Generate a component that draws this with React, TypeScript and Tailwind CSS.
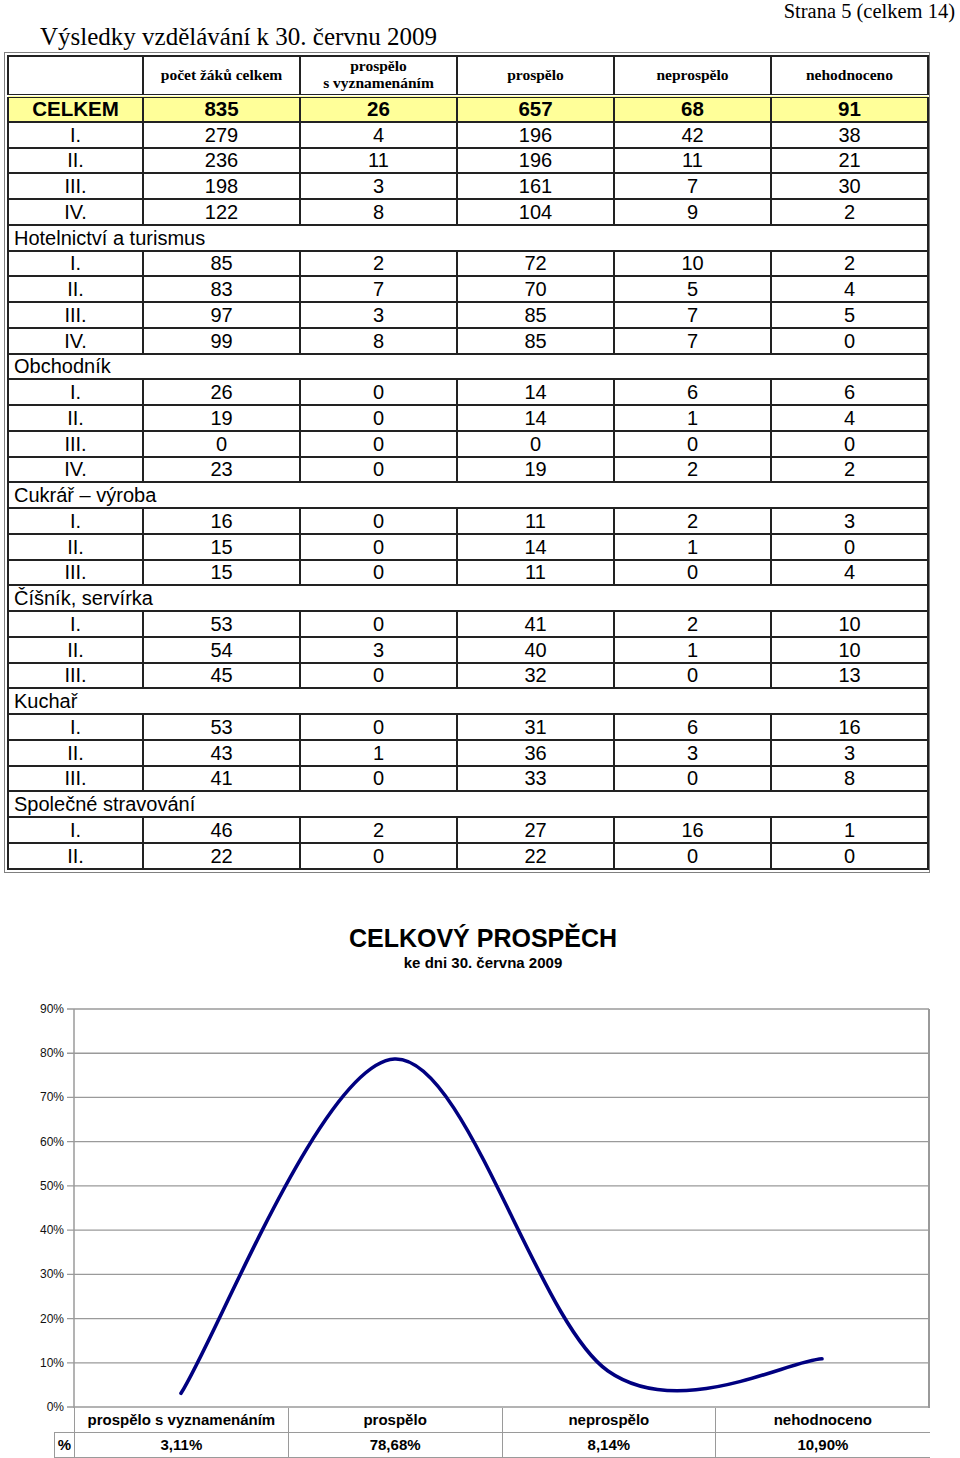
const serif = { fontFamily: '"Liberation Serif", "Times New Roman", serif' };

type Row = [string, number, number, number, number, number];

const totals: Row[] = [
  ["I.", 279, 4, 196, 42, 38],
  ["II.", 236, 11, 196, 11, 21],
  ["III.", 198, 3, 161, 7, 30],
  ["IV.", 122, 8, 104, 9, 2],
];

const sections: { name: string; rows: Row[] }[] = [
  {
    name: "Hotelnictví a turismus",
    rows: [
      ["I.", 85, 2, 72, 10, 2],
      ["II.", 83, 7, 70, 5, 4],
      ["III.", 97, 3, 85, 7, 5],
      ["IV.", 99, 8, 85, 7, 0],
    ],
  },
  {
    name: "Obchodník",
    rows: [
      ["I.", 26, 0, 14, 6, 6],
      ["II.", 19, 0, 14, 1, 4],
      ["III.", 0, 0, 0, 0, 0],
      ["IV.", 23, 0, 19, 2, 2],
    ],
  },
  {
    name: "Cukrář – výroba",
    rows: [
      ["I.", 16, 0, 11, 2, 3],
      ["II.", 15, 0, 14, 1, 0],
      ["III.", 15, 0, 11, 0, 4],
    ],
  },
  {
    name: "Číšník, servírka",
    rows: [
      ["I.", 53, 0, 41, 2, 10],
      ["II.", 54, 3, 40, 1, 10],
      ["III.", 45, 0, 32, 0, 13],
    ],
  },
  {
    name: "Kuchař",
    rows: [
      ["I.", 53, 0, 31, 6, 16],
      ["II.", 43, 1, 36, 3, 3],
      ["III.", 41, 0, 33, 0, 8],
    ],
  },
  {
    name: "Společné stravování",
    rows: [
      ["I.", 46, 2, 27, 16, 1],
      ["II.", 22, 0, 22, 0, 0],
    ],
  },
];

const cell = "border-2 border-[#222] p-0 text-center align-middle";
const headCell = "border-2 border-[#222] border-b-[4px] border-double p-0 pb-[3px] font-bold";

const DataRow = ({ row }: { row: Row }) => (
  <tr className="h-[25.75px]">
    {row.map((v, i) => (
      <td key={i} className={cell}>
        {v}
      </td>
    ))}
  </tr>
);

// chart geometry, page coordinates; svg starts at y = 995
const top = 995;
const zeroY = 1407 - top;
const step = 44.22;
const yOf = (pct: number) => zeroY - pct * (step / 10);

const pts = [
  [181, yOf(3.11)],
  [394.5, yOf(78.68)],
  [608, yOf(8.14)],
  [822, yOf(10.9)],
];

const smoothPath = () => {
  let d = `M ${pts[0][0]} ${pts[0][1]}`;
  for (let i = 0; i < pts.length - 1; i++) {
    const p0 = pts[Math.max(i - 1, 0)];
    const p1 = pts[i];
    const p2 = pts[i + 1];
    const p3 = pts[Math.min(i + 2, pts.length - 1)];
    const c1x = p1[0] + (p2[0] - p0[0]) / 6;
    const c1y = p1[1] + (p2[1] - p0[1]) / 6;
    const c2x = p2[0] - (p3[0] - p1[0]) / 6;
    const c2y = p2[1] - (p3[1] - p1[1]) / 6;
    d += ` C ${c1x} ${c1y}, ${c2x} ${c2y}, ${p2[0]} ${p2[1]}`;
  }
  return d;
};

const levels = [0, 10, 20, 30, 40, 50, 60, 70, 80, 90];

const App = () => {
  return (
    <div className="w-[960px] h-[1458px] bg-white text-black overflow-hidden font-['Liberation_Sans',Arial,sans-serif]">
      {/* page header */}
      <div style={serif}>
        <div className="h-[22px] text-right pr-[5px] text-[20.5px] leading-[22px]">Strana 5 (celkem 14)</div>
        <div className="h-[29px] mt-[1px] pl-[40px] text-[25px] leading-[28px]">Výsledky vzdělávání k 30. červnu 2009</div>
      </div>

      {/* results table */}
      <div className="ml-[4px] w-[926px] border border-[#808080] p-[2px]">
        <table className="w-[920px] table-fixed border-collapse border-2 border-[#222] text-[20px] leading-[22px]">
          <colgroup>
            <col className="w-[135px]" />
            <col className="w-[157px]" />
            <col className="w-[157px]" />
            <col className="w-[157px]" />
            <col className="w-[157px]" />
            <col className="w-[157px]" />
          </colgroup>
          <thead>
            <tr className="h-[38px] text-[15.5px] leading-[17px] font-bold" style={serif}>
              <th className={headCell}></th>
              <th className={headCell}>počet žáků celkem</th>
              <th className={headCell}>
                prospělo
                <br />s vyznamenáním
              </th>
              <th className={headCell}>prospělo</th>
              <th className={headCell}>neprospělo</th>
              <th className={headCell}>nehodnoceno</th>
            </tr>
          </thead>
          <tbody>
            <tr className="h-[25.75px] bg-[#ffff99] font-bold text-[20.5px]">
              {["CELKEM", 835, 26, 657, 68, 91].map((v, i) => (
                <td key={i} className={cell}>
                  {v}
                </td>
              ))}
            </tr>
            {totals.map((r) => (
              <DataRow key={"t" + r[0]} row={r} />
            ))}
            {sections.map((s) => (
              <>
                <tr key={s.name} className="h-[25.75px]">
                  <td colSpan={6} className="border-2 border-[#222] p-0 pl-[5px] text-left align-middle">
                    {s.name}
                  </td>
                </tr>
                {s.rows.map((r) => (
                  <DataRow key={s.name + r[0]} row={r} />
                ))}
              </>
            ))}
          </tbody>
        </table>
      </div>

      {/* chart heading */}
      <div className="pl-[6px] text-center">
        <h2 className="mt-[50px] text-[25px] leading-[30px] font-bold">CELKOVÝ PROSPĚCH</h2>
        <p className="mt-[1px] text-[15px] leading-[18px] font-bold">ke dni 30. června 2009</p>
      </div>

      {/* chart */}
      <svg width="960" height={zeroY + 1} className="block mt-[23px] overflow-visible">
        {levels.map((l) => (
          <g key={l}>
            <line x1="67" x2="929" y1={yOf(l)} y2={yOf(l)} stroke="#9a9a9a" strokeWidth="1.3" />
            <text
              x="64"
              y={yOf(l) + 4}
              textAnchor="end"
              fontSize="12"
              fontFamily="Liberation Sans, Arial, sans-serif"
              fill="#111"
            >
              {l}%
            </text>
          </g>
        ))}
        <line x1="74" x2="74" y1={yOf(90)} y2={zeroY + 1} stroke="#9a9a9a" strokeWidth="1.5" />
        <line x1="929" x2="929" y1={yOf(90)} y2={zeroY + 1} stroke="#9a9a9a" strokeWidth="2" />
        <path d={smoothPath()} fill="none" stroke="#000080" strokeWidth="3.6" strokeLinecap="round" />
      </svg>

      {/* data table under chart */}
      <table className="ml-[54px] w-[875px] table-fixed border-collapse text-[15px] leading-[18px] font-bold">
        <colgroup>
          <col className="w-[20px]" />
          <col className="w-[213.75px]" />
          <col className="w-[213.75px]" />
          <col className="w-[213.75px]" />
          <col className="w-[213.75px]" />
        </colgroup>
        <tbody>
          <tr className="h-[25px]">
            <td className="p-0 border-b border-[#9a9a9a]"></td>
            {["prospělo s vyznamenáním", "prospělo", "neprospělo", "nehodnoceno"].map((t) => (
              <td key={t} className="p-0 text-center border-l border-b border-[#9a9a9a]">
                {t}
              </td>
            ))}
          </tr>
          <tr className="h-[25px]">
            <td className="p-0 text-center border-l border-b border-[#9a9a9a]">%</td>
            {["3,11%", "78,68%", "8,14%", "10,90%"].map((t) => (
              <td key={t} className="p-0 text-center border-l border-b border-[#9a9a9a]">
                {t}
              </td>
            ))}
          </tr>
        </tbody>
      </table>
    </div>
  );
};

export default App;
